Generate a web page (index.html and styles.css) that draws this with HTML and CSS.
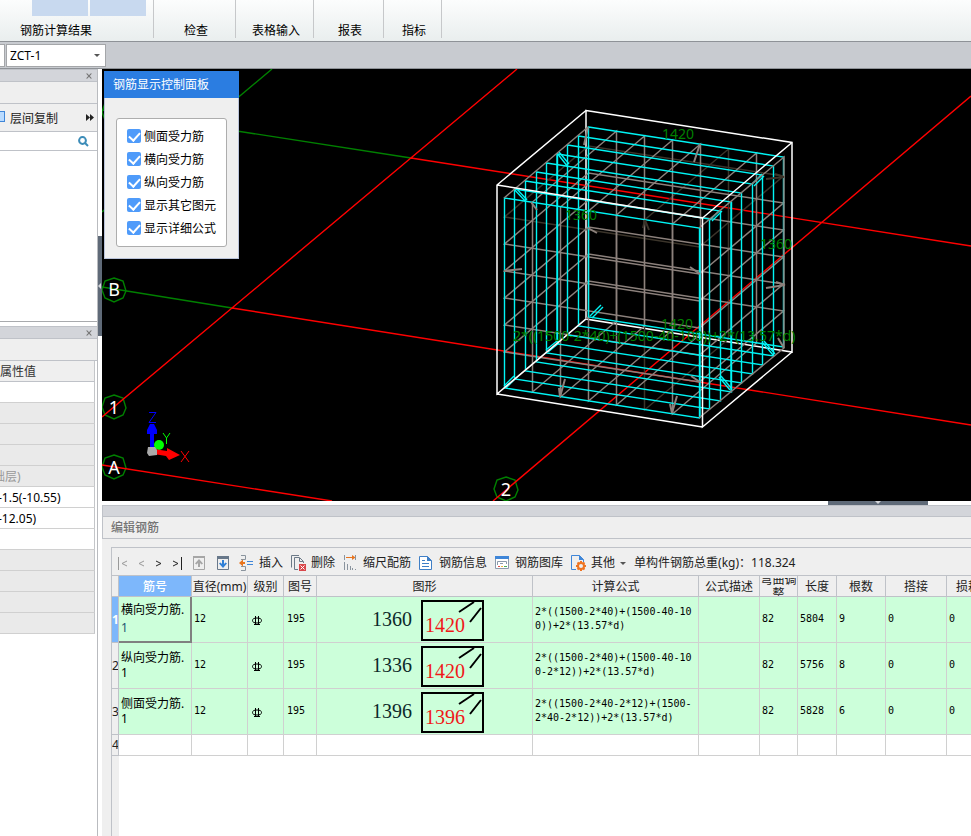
FILE: index.html
```html
<!DOCTYPE html>
<html lang="zh-CN">
<head>
<meta charset="utf-8">
<title>编辑钢筋</title>
<link rel="stylesheet" href="styles.css">
</head>
<body>
<header class="ribbon">
  <section class="group group-results">
    <div class="tiles"><span class="tile"></span><span class="tile"></span></div>
    <span class="group-label">钢筋计算结果</span>
  </section>
  <section class="group group-check"><span class="group-label">检查</span></section>
  <section class="group group-form"><span class="group-label">表格输入</span></section>
  <section class="group group-report"><span class="group-label">报表</span></section>
  <section class="group group-index"><span class="group-label">指标</span></section>
</header>

<div class="context-bar">
  <span class="combo-tail"></span>
  <span class="combo"><select aria-label="构件"><option>ZCT-1</option></select></span>
</div>

<main class="workspace">
  <aside class="side">
    <div class="dock-title"><button class="close" aria-label="关闭"><svg width="6" height="6" viewBox="0 0 6 6"><path d="M0 0.5H1.5L3 2.2L4.5 .5H6L3.8 3L6 5.5H4.5L3 3.8L1.5 5.5H0L2.2 3Z"/></svg></button></div>
    <div class="dock-tabs"></div>
    <div class="copy-bar">
      <button class="copy"><span class="copy-icon"></span>层间复制</button>
      <button class="more" aria-label="更多"><svg width="8" height="7" viewBox="0 0 8 7"><path d="M0 0L4 3.5L0 7ZM4 0L8 3.5L4 7Z"/></svg></button>
    </div>
    <label class="search"><input type="text" aria-label="搜索"><svg width="11" height="11" viewBox="0 0 11 11"><circle cx="4.5" cy="4.5" r="3.4"/><path d="M7 7L10 10"/></svg></label>
    <div class="tree"></div>
    <div class="dock-title"><button class="close" aria-label="关闭"><svg width="6" height="6" viewBox="0 0 6 6"><path d="M0 0.5H1.5L3 2.2L4.5 .5H6L3.8 3L6 5.5H4.5L3 3.8L1.5 5.5H0L2.2 3Z"/></svg></button></div>
    <div class="dock-tabs"></div>
    <table class="props">
      <thead><tr><th>属性值</th></tr></thead>
      <tbody>
        <tr class="editable"><td></td></tr>
        <tr><td></td></tr>
        <tr><td></td></tr>
        <tr><td></td></tr>
        <tr><td class="scrolled">础层)</td></tr>
        <tr class="editable"><td>-1.5(-10.55)</td></tr>
        <tr class="editable"><td>-12.05)</td></tr>
        <tr class="editable"><td></td></tr>
        <tr><td></td></tr>
        <tr><td></td></tr>
        <tr><td></td></tr>
        <tr><td></td></tr>
      </tbody>
    </table>
  </aside>
  <div class="splitter"><span class="splitter-handle"></span></div>

  <div class="content">
    <section class="viewport">
      <svg class="scene" role="img" aria-label="三维钢筋视图">
        <defs>
          <path id="hoop" d="M0 0l195 30v190l-195-30z"/>
          <path id="depth" d="M0 0l84-71v190l-84 71z"/>
          <path id="ring" d="M0 0l195 30l84-71l-195-30z"/>
          <path id="bubble" d="M0-12L9-9L12 1L9 8L0 12L-9 8L-12 0L-9-9Z"/>
        </defs>
        <g transform="translate(-102 -69)">
          <g class="axis-off">
            <path d="M102 287L232 308M102 110L411 158M102 212L272 69"/>
            <use href="#bubble" x="114" y="112"/>
            <use href="#bubble" x="114" y="290"/>
            <use href="#bubble" x="114" y="407"/>
            <use href="#bubble" x="114" y="467"/>
            <use href="#bubble" x="506" y="489"/>
          </g>
          <path class="axis-on" d="M102 417L517 69M411 158L971 246M232 308L971 425M102 465L332 501M493 501L971 96"/>
          <g class="axis-name">
            <text x="114" y="296">B</text>
            <text x="114" y="414">1</text>
            <text x="114" y="474">A</text>
            <text x="506" y="496">2</text>
          </g>
          <g class="edge"><path d="M586 110.500L792 142.500V352L586 319Z"/></g>
          <g class="bar-dark">
            <use href="#ring" x="504.500" y="217"/>
            <use href="#depth" x="644.500" y="220"/>
          </g>
          <g class="bar">
            <use href="#ring" x="504.500" y="244"/>
            <use href="#ring" x="504.500" y="271"/>
            <use href="#ring" x="504.500" y="298"/>
            <use href="#ring" x="504.500" y="325"/>
            <use href="#ring" x="504.500" y="352"/>
            <use href="#depth" x="532.500" y="202"/>
            <use href="#depth" x="560.500" y="207"/>
            <use href="#depth" x="588.500" y="211"/>
            <use href="#depth" x="616.500" y="215"/>
            <use href="#depth" x="672.500" y="224"/>
          </g>
          <g class="hoops">
            <use href="#hoop" x="588.500" y="127"/>
            <use href="#hoop" x="578.500" y="136"/>
            <use href="#hoop" x="567.500" y="145"/>
            <use href="#hoop" x="557.500" y="154"/>
            <use href="#hoop" x="546.500" y="163"/>
            <use href="#hoop" x="536.500" y="172"/>
            <use href="#hoop" x="525.500" y="181"/>
            <use href="#hoop" x="514.500" y="189"/>
            <use href="#hoop" x="504.500" y="198"/>
            <path d="M557 154V343M700 228V418M731 202V392"/>
            <path d="M557 153L568 167M559 152L569 164M514 189L526 202M516 188L527 200M752 184L762 174M754 186L764 176M710 220L720 210M712 221L722 211M504 386L514 376M506 388L516 378M546 350L557 341M548 352L559 343M590 316L601 305M592 318L603 307M762 342L773 355M764 341L775 354M719 377L730 390M721 376L732 389"/>
          </g>
          <g class="bar">
            <path d="M504 198L588 127M699 228L784 157V348L699 418M504 388L588 317"/>
            <path class="hook" d="M588 127L584 145M700 144L694 162M504 271L522 269M588 228L597 233M560 397L565 379M560 397L559 388M672 413L677 396M672 413L670 404M785 285L766 288M785 285L776 282M690 267L700 274M691 376L700 382M778 338L784 348M531 202L537 210"/>
          </g>
          <path class="bar-dark hook" d="M784 177L766 179M784 177L775 174M645 220L649 230M645 220L643 228"/>
          <g class="edge">
            <path d="M586 110.500L497 185V394L586 319M792 142.500L702.500 218V427L792 352M497 185L702.500 218M497 394L702.500 427"/>
          </g>
          <g class="dims">
            <text x="662" y="139">1420</text>
            <text x="565" y="220">1360</text>
            <text x="760" y="249">1360</text>
            <text x="661" y="329">1420</text>
            <text x="513" y="341">2*((1500-2*40)+(1500-40-100))+2*(13.57*d)</text>
          </g>
          <g class="gizmo">
            <path class="z" d="M150 451V434H147V430L150 424H154L157 430V434H154V451Z"/>
            <circle class="y" cx="159" cy="445" r="5"/>
            <path class="x" d="M154 449L167 451V448L180 455L169 460L166 456L154 454Z"/>
            <path class="o" d="M148 447L155 447L157 450V455L149 456L147 453Z"/>
            <path class="zl" d="M149 412.500H156L149 422.500H156"/>
            <path class="yl" d="M163 433L166.500 438L170 433M166.500 438V444"/>
            <path class="xl" d="M181 451L189 462M189 451L181 462"/>
          </g>
        </g>
      </svg>
      <form class="display-panel">
        <h2>钢筋显示控制面板</h2>
        <div class="options">
          <label><input type="checkbox" checked>侧面受力筋</label>
          <label><input type="checkbox" checked>横向受力筋</label>
          <label><input type="checkbox" checked>纵向受力筋</label>
          <label><input type="checkbox" checked>显示其它图元</label>
          <label><input type="checkbox" checked>显示详细公式</label>
        </div>
      </form>
    </section>
    <div class="h-splitter"><span class="h-handle"></span></div>

    <section class="editor">
      <div class="editor-grip"></div>
      <h2 class="editor-title">编辑钢筋</h2>
      <div class="editor-body">
        <div class="toolbar">
          <div class="nav">
            <button disabled aria-label="首行"><svg width="12" height="14" viewBox="0 0 12 14"><path d="M1.500 1V14M10 5L5 7.500L10 10"/></svg></button>
            <button disabled aria-label="上一行"><svg width="12" height="14" viewBox="0 0 12 14"><path d="M9 5L4 7.500L9 10"/></svg></button>
            <button aria-label="下一行"><svg width="12" height="14" viewBox="0 0 12 14"><path d="M3 5L8 7.500L3 10"/></svg></button>
            <button aria-label="末行"><svg width="12" height="14" viewBox="0 0 12 14"><path d="M2 5L7 7.500L2 10M10.500 1V14"/></svg></button>
          </div>
          <button aria-label="上移"><svg width="16" height="16" viewBox="0 0 16 16"><path fill="none" stroke="#a6a6a6" d="M2.500 1.500H13.500V14.500H2.500Z"/><path fill="#a6a6a6" d="M2 1H14V3H2ZM8 4L12 8.500L10.500 9.500L9 8V12H7V8L5.500 9.500L4 8.500Z"/></svg></button>
          <button aria-label="下移"><svg width="16" height="16" viewBox="0 0 16 16"><path fill="none" stroke="#68788a" d="M2.500 1.500H13.500V14.500H2.500Z"/><path fill="#68788a" d="M2 1H14V4H2Z"/><path fill="#2f7fd6" d="M8 13L12 8.500L10.500 7.500L9 9V5H7V9L5.500 7.500L4 8.500Z"/></svg></button>
          <button><svg width="16" height="16" viewBox="0 0 16 16"><g fill="none" stroke="#8a949e"><path d="M2 .5H6.500V4.500H2M2 11.500H6.500V15.500H2"/></g><path fill="#e8741e" d="M0 8L4 4.500V7H6V9H4V11.500Z"/><path fill="none" stroke="#3f86d8" d="M8 6.500H14M8 9.500H14"/></svg>插入</button>
          <button><svg width="16" height="16" viewBox="0 0 16 16"><path fill="none" stroke="#6c7a88" d="M.5 12.500V.5H8M3.500 2.500H8.500L12.500 6.500V8M3.500 2.500V14.500H7"/><path fill="none" stroke="#6c7a88" d="M8.500 3V6.500H12"/><path fill="#d9474b" d="M8 9H15V16H8Z"/><path stroke="#fff" d="M9.500 10.500L13.500 14.500M13.500 10.500L9.500 14.500"/></svg>删除</button>
          <button><svg width="16" height="16" viewBox="0 0 16 16"><path fill="none" stroke="#e8741e" d="M3 2.500H11"/><path fill="#e8741e" d="M9 0L12.500 2.500L9 5Z"/><path fill="none" stroke="#8a949e" d="M1.500 0V5M12.500 0V5M1.500 7V15M4.500 9V15M7.500 11V15M9.500 13V15M12.500 14V15"/></svg>缩尺配筋</button>
          <button><svg width="16" height="16" viewBox="0 0 16 16"><path fill="#fff" stroke="#3f7fc6" d="M.5 1.500H8.500L12.500 5.500V14.500H.5Z"/><path fill="#3f7fc6" d="M8 1L13 6H8Z"/><path stroke="#3f7fc6" d="M3 5.500H6M3 8.500H10M3 11.500H10"/></svg>钢筋信息</button>
          <button><svg width="16" height="16" viewBox="0 0 16 16"><path fill="#fff" stroke="#8c9aab" d="M.5 1.500H13.500V13.500H.5Z"/><path fill="#3f86d8" d="M0 1H14V4H0Z"/><path fill="none" stroke="#8c9aab" d="M2.500 10V6.500H11.500V9M5 8.500H8"/><path stroke="#e0504b" d="M3 11.500H5"/><path stroke="#efb73e" d="M6 11.500H8"/><path stroke="#4bae5c" d="M9 11.500H12"/></svg>钢筋图库</button>
          <button><svg width="16" height="16" viewBox="0 0 16 16"><path fill="none" stroke="#3f86d8" d="M5 14.500H.5V.5H8.500L12.500 4.500V7"/><path fill="#3f86d8" d="M8 0L13 5H8Z"/><circle cx="10" cy="11" r="3" fill="none" stroke="#ee7421" stroke-width="2"/><path stroke="#ee7421" stroke-width="2" d="M10 6V8M10 14V16M5 11H7M13 11H15M6.500 7.500L8 9M12 13L13.500 14.500M13.500 7.500L12 9M8 13L6.500 14.500"/></svg>其他<span class="caret"></span></button>
          <span class="total">单构件钢筋总重(kg)：118.324</span>
        </div>
        <div class="grid">
        <table class="bars">
          <colgroup><col class="c-row"><col class="c-name"><col class="c-dia"><col class="c-grade"><col class="c-fig"><col class="c-shape"><col class="c-formula"><col class="c-desc"><col class="c-bend"><col class="c-len"><col class="c-count"><col class="c-lap"><col class="c-loss"></colgroup>
          <thead>
            <tr><th></th><th class="active">筋号</th><th>直径(mm)</th><th>级别</th><th>图号</th><th>图形</th><th>计算公式</th><th>公式描述</th><th><div class="clip">弯曲调整</div></th><th>长度</th><th>根数</th><th>搭接</th><th>损耗</th></tr>
          </thead>
          <tbody>
            <tr class="current"><th>1</th><td>横向受力筋.<br><span class="suffix">1</span></td><td>12</td>
              <td><svg class="grade" width="10" height="10" viewBox="0 0 10 10"><ellipse cx="5" cy="4.500" rx="4.500" ry="2.500"/><path d="M3.500 0V9M6.500 0V9M2 8.500H8"/></svg></td><td>195</td>
              <td><svg class="shape" width="114" height="42" viewBox="0 0 114 42"><text x="0" y="27">1360</text><path d="M50 2H111V41H50ZM87 13L102 3M98 23L109 9"/><text class="red" x="53" y="33">1420</text></svg></td>
              <td>2*((1500-2*40)+(1500-40-100))+2*(13.57*d)</td><td></td><td>82</td><td>5804</td><td>9</td><td>0</td><td>0</td></tr>
            <tr><th>2</th><td>纵向受力筋.<br>1</td><td>12</td>
              <td><svg class="grade" width="10" height="10" viewBox="0 0 10 10"><ellipse cx="5" cy="4.500" rx="4.500" ry="2.500"/><path d="M3.500 0V9M6.500 0V9M2 8.500H8"/></svg></td><td>195</td>
              <td><svg class="shape" width="114" height="42" viewBox="0 0 114 42"><text x="0" y="27">1336</text><path d="M50 2H111V41H50ZM87 13L102 3M98 23L109 9"/><text class="red" x="53" y="33">1420</text></svg></td>
              <td>2*((1500-2*40)+(1500-40-100-2*12))+2*(13.57*d)</td><td></td><td>82</td><td>5756</td><td>8</td><td>0</td><td>0</td></tr>
            <tr><th>3</th><td>侧面受力筋.<br>1</td><td>12</td>
              <td><svg class="grade" width="10" height="10" viewBox="0 0 10 10"><ellipse cx="5" cy="4.500" rx="4.500" ry="2.500"/><path d="M3.500 0V9M6.500 0V9M2 8.500H8"/></svg></td><td>195</td>
              <td><svg class="shape" width="114" height="42" viewBox="0 0 114 42"><text x="0" y="27">1396</text><path d="M50 2H111V41H50ZM87 13L102 3M98 23L109 9"/><text class="red" x="53" y="33">1396</text></svg></td>
              <td>2*((1500-2*40-2*12)+(1500-2*40-2*12))+2*(13.57*d)</td><td></td><td>82</td><td>5828</td><td>6</td><td>0</td><td>0</td></tr>
            <tr class="blank"><th>4</th><td></td><td></td><td></td><td></td><td></td><td></td><td></td><td></td><td></td><td></td><td></td><td></td></tr>
          </tbody>
        </table>
        </div>
      </div>
    </section>
  </div>
</main>
</body>
</html>
```
FILE: styles.css
```css
* { box-sizing: border-box; }

body {
  margin: 0;
  min-height: 100vh;
  display: flex;
  flex-direction: column;
  overflow: hidden;
  background: #fff;
  color: #000;
  font: 12px/18px "Noto Sans", "Noto Sans CJK SC", sans-serif;
}

button, input, select { font: inherit; color: inherit; }
button {
  display: flex;
  align-items: center;
  padding: 0;
  border: 0;
  background: none;
  white-space: nowrap;
}
h2 { margin: 0; font-size: 12px; font-weight: 400; }

/* Ribbon */
.ribbon {
  display: flex;
  height: 42px;
  padding-bottom: 3px;
  overflow: hidden;
  background: linear-gradient(#fcfdfd, #e9eeee);
  border-bottom: 1px solid #8e9297;
}
.group {
  display: flex;
  flex-direction: column;
  justify-content: flex-end;
  align-items: center;
  padding-left: 3px;
  border-right: 1px solid #c6c8ca;
}
.group-label { line-height: 14px; }
.group-results { width: 154px; align-items: flex-start; padding-left: 20px; justify-content: space-between; }
.group-check { width: 82px; }
.group-form { width: 78px; }
.group-report { width: 70px; }
.group-index { width: 58px; }
.tiles { display: flex; gap: 2px; padding-left: 12px; }
.tile { width: 56px; height: 16px; background: #c8d9ef; }

.context-bar {
  display: flex;
  align-items: center;
  gap: 1px;
  height: 27px;
  background: #c8cbd0;
  border-bottom: 1px solid #8e9297;
}
.combo-tail { width: 5px; height: 23px; background: #fff; border: 1px solid #a4a6a9; border-left: 0; }
.combo { display: flex; align-items: center; width: 100px; height: 23px; padding-right: 5px; background: #fff; border: 1px solid #a4a6a9; }
.combo select { flex: 1; appearance: none; border: 0; background: none; padding: 1px 3px 0; }
.combo::after, .caret::after { content: ""; display: block; border: 3px solid transparent; border-top-color: #555; border-bottom: 0; }

/* Docked panels on the left */
.workspace { display: flex; flex: 1; }
.side { width: 98px; border-right: 1px solid #b9bbbf; overflow: hidden; }
.dock-title {
  display: flex;
  align-items: center;
  justify-content: flex-end;
  height: 13px;
  padding-right: 5px;
  background: #d3d5da;
  border-top: 1px solid #bfc2c8;
  border-bottom: 1px solid #bfc2c8;
}
.close svg { fill: #777; display: block; }
.dock-tabs { height: 22px; background: #efefef; border-bottom: 1px solid #bfc2c8; }
.copy-bar { display: flex; align-items: center; justify-content: space-between; height: 28px; padding-right: 3px; background: #efefef; border-bottom: 1px solid #bfc2c8; color: #222; }
.copy { gap: 5px; padding-top: 2px; }
.copy-icon { width: 5px; height: 11px; margin-bottom: 5px; background: #b9dbff; border: 1px solid #3f86d8; border-left: 0; }
.more svg { fill: #222; }
.search { display: flex; align-items: center; height: 19px; padding-right: 8px; border-bottom: 1px solid #bfc2c8; }
.search input { flex: 1; min-width: 0; height: 16px; border: 0; padding: 0; background: none; }
.search svg { fill: none; stroke: #3c8cb8; stroke-width: 2; }
.tree { height: 175px; border-bottom: 4px solid #fff; box-shadow: inset 0 -1px #a8aaad; }
.props { width: 95px; border-spacing: 0; }
.props th, .props td {
  height: 21px;
  padding: 2px 0 0;
  line-height: 18px;
  text-align: left;
  font-weight: 400;
  background: #eaeaea;
  color: #999;
  border-right: 1px solid #c4c6c9;
  border-bottom: 1px solid #d0d0d0;
}
.props th { background: #efefef; color: #333; border-bottom-color: #bfc2c8; }
.props .editable td { background: #fff; color: #000; text-indent: -2px; }
.props .scrolled { text-indent: -7px; }
.splitter { width: 4px; padding-top: 167px; }
.splitter-handle { display: flex; align-items: center; height: 100px; background: #5f6a78; }
.splitter-handle::before { content: ""; border: 3px solid transparent; border-right-color: #d3d5da; border-left: 0; }

/* Model view */
.content { flex: 1; min-width: 0; display: flex; flex-direction: column; }
.viewport { position: relative; height: 432px; background: #000; overflow: hidden; }
.scene { display: block; width: 100%; height: 100%; fill: none; }
.axis-off { stroke: #008000; stroke-width: 1.4; }
.axis-on { stroke: #f00; stroke-width: 1.4; }
.axis-name { fill: #fff; font-size: 18px; text-anchor: middle; }
.edge { stroke: #fff; stroke-width: 1.5; }
.hoops { stroke: #00f4f4; stroke-width: 1.4; }
.bar { stroke: #8c817c; stroke-width: 1.5; }
.bar-dark { stroke: #3b342a; stroke-width: 1.5; }
.hook { stroke-width: 2; }
.dims { fill: #008000; font-size: 14px; }
.gizmo .z { fill: #00f; }
.gizmo .y { fill: #0f0; }
.gizmo .x { fill: #f00; }
.gizmo .o { fill: #aaa; }
.gizmo .zl { stroke: #00f; }
.gizmo .yl { stroke: #0f0; }
.gizmo .xl { stroke: #f00; }

.display-panel { position: absolute; left: 2px; top: 2px; width: 135px; background: #efefef; border: 1px solid #b9c3da; border-top: 0; }
.display-panel h2 { height: 27px; margin: 0 -1px; padding-left: 9px; line-height: 28px; background: #2b7de1; color: #fff; }
.options { display: flex; flex-direction: column; gap: 5px; margin: 20px 11px 11px; padding: 9px 0 8px 10px; background: #fff; border: 1px solid #adadad; border-radius: 3px; }
.options label { display: flex; align-items: center; gap: 3px; white-space: nowrap; }
.options input { appearance: none; display: flex; justify-content: center; width: 14px; height: 14px; margin: 0 0 2px; border-radius: 2px; background: #4f9bfa; }
.options input:checked::after { content: ""; width: 5px; height: 9px; margin-top: 1px; border: solid #fff; border-width: 0 2px 2px 0; transform: rotate(42deg); }

.h-splitter { height: 4px; padding-right: 43px; display: flex; justify-content: flex-end; }
.h-handle { display: flex; justify-content: center; width: 100px; background: #5f6a78; }
.h-handle::before { content: ""; height: 0; border: 3px solid transparent; border-top-color: #d3d5da; border-bottom: 0; }

/* Rebar editor */
.editor { flex: 1; display: flex; flex-direction: column; background: #efefef; }
.editor-grip { height: 12px; background: #d3d5da; border: 1px solid #bfc2c8; border-right: 0; }
.editor-title { height: 22px; padding-left: 8px; line-height: 22px; font-weight: 500; color: #747474; border-left: 1px solid #bfc2c8; border-bottom: 1px solid #bfc2c8; }
.editor-body { flex: 1; display: flex; flex-direction: column; margin: 8px 0 0 9px; border: 1px solid #bfc2c8; border-width: 1px 0 0 1px; }
.toolbar { display: flex; align-items: center; gap: 8px; height: 28px; padding: 3px 0 0 5px; color: #222; white-space: nowrap; border-bottom: 1px solid #bfc2c8; }
.toolbar button { gap: 4px; }
.nav { display: flex; gap: 6px; }
.nav svg { fill: none; stroke: #222; }
.nav button:disabled svg { stroke: #999; }
.caret { padding-left: 1px; }

.grid { flex: 1; overflow: hidden; background: linear-gradient(90deg, #efefef 7px, #fff 7px); }
.bars { table-layout: fixed; width: 100%; min-width: 878px; border-spacing: 0; }
.c-row { width: 7px; }
.c-name { width: 73px; }
.c-dia { width: 56px; }
.c-grade { width: 36px; }
.c-fig { width: 33px; }
.c-shape { width: 216px; }
.c-formula { width: 166px; }
.c-desc { width: 61px; }
.c-bend { width: 38px; }
.c-len { width: 39px; }
.c-count { width: 49px; }
.c-lap { width: 61px; }
.c-loss { width: 43px; }
.bars th {
  height: 21px;
  padding: 2px 0 0;
  background: #efefef;
  font-weight: 400;
  color: #222;
  white-space: nowrap;
  border-right: 1px solid #bfc2c8;
  border-bottom: 1px solid #bfc2c8;
}
.bars .active { background: #7db7fb; color: #fff; font-weight: 500; }
.clip { display: flex; align-items: center; justify-content: center; height: 18px; overflow: hidden; line-height: 14px; white-space: normal; }
.bars td {
  height: 46px;
  padding: 0 4px 1px 2px;
  background: #ccffda;
  border-right: 1px solid #d0d0d0;
  border-bottom: 1px solid #d0d0d0;
  font: 10px/14px "DejaVu Sans Mono", "Noto Sans CJK SC", monospace;
  word-break: break-all;
}
.bars td:nth-child(2) { padding-right: 0; font-size: 12px; line-height: 15px; font-family: "Noto Sans", "Noto Sans CJK SC", sans-serif; white-space: nowrap; }
.bars td:nth-child(4) { padding-left: 4px; }
.bars td:nth-child(5) { padding-left: 3px; }
.bars tbody th { padding-top: 0; border-color: #bfc2c8; font-size: 12px; overflow: hidden; }
.bars .current th { background: #7db7fb; color: #fff; font-weight: 700; }
.bars .current td:nth-child(2) { line-height: 18px; border-right: 2px solid #808080; border-bottom: 2px solid #808080; }
.suffix { color: #1d5570; }
.bars td:nth-child(6) { padding: 0 0 0 8px; text-align: center; }
.grade, .shape { display: block; margin: 0 auto; fill: none; stroke: #000; }
.grade { margin: 3px 0 0; }
.shape { stroke-width: 2; }
.shape text { fill: #0c2a2a; stroke: none; font: 20px "Liberation Serif", serif; }
.shape .red { fill: #f01818; }
.bars .blank th, .bars .blank td { height: 21px; padding: 0; }
.bars .blank td { background: #fff; }
```
